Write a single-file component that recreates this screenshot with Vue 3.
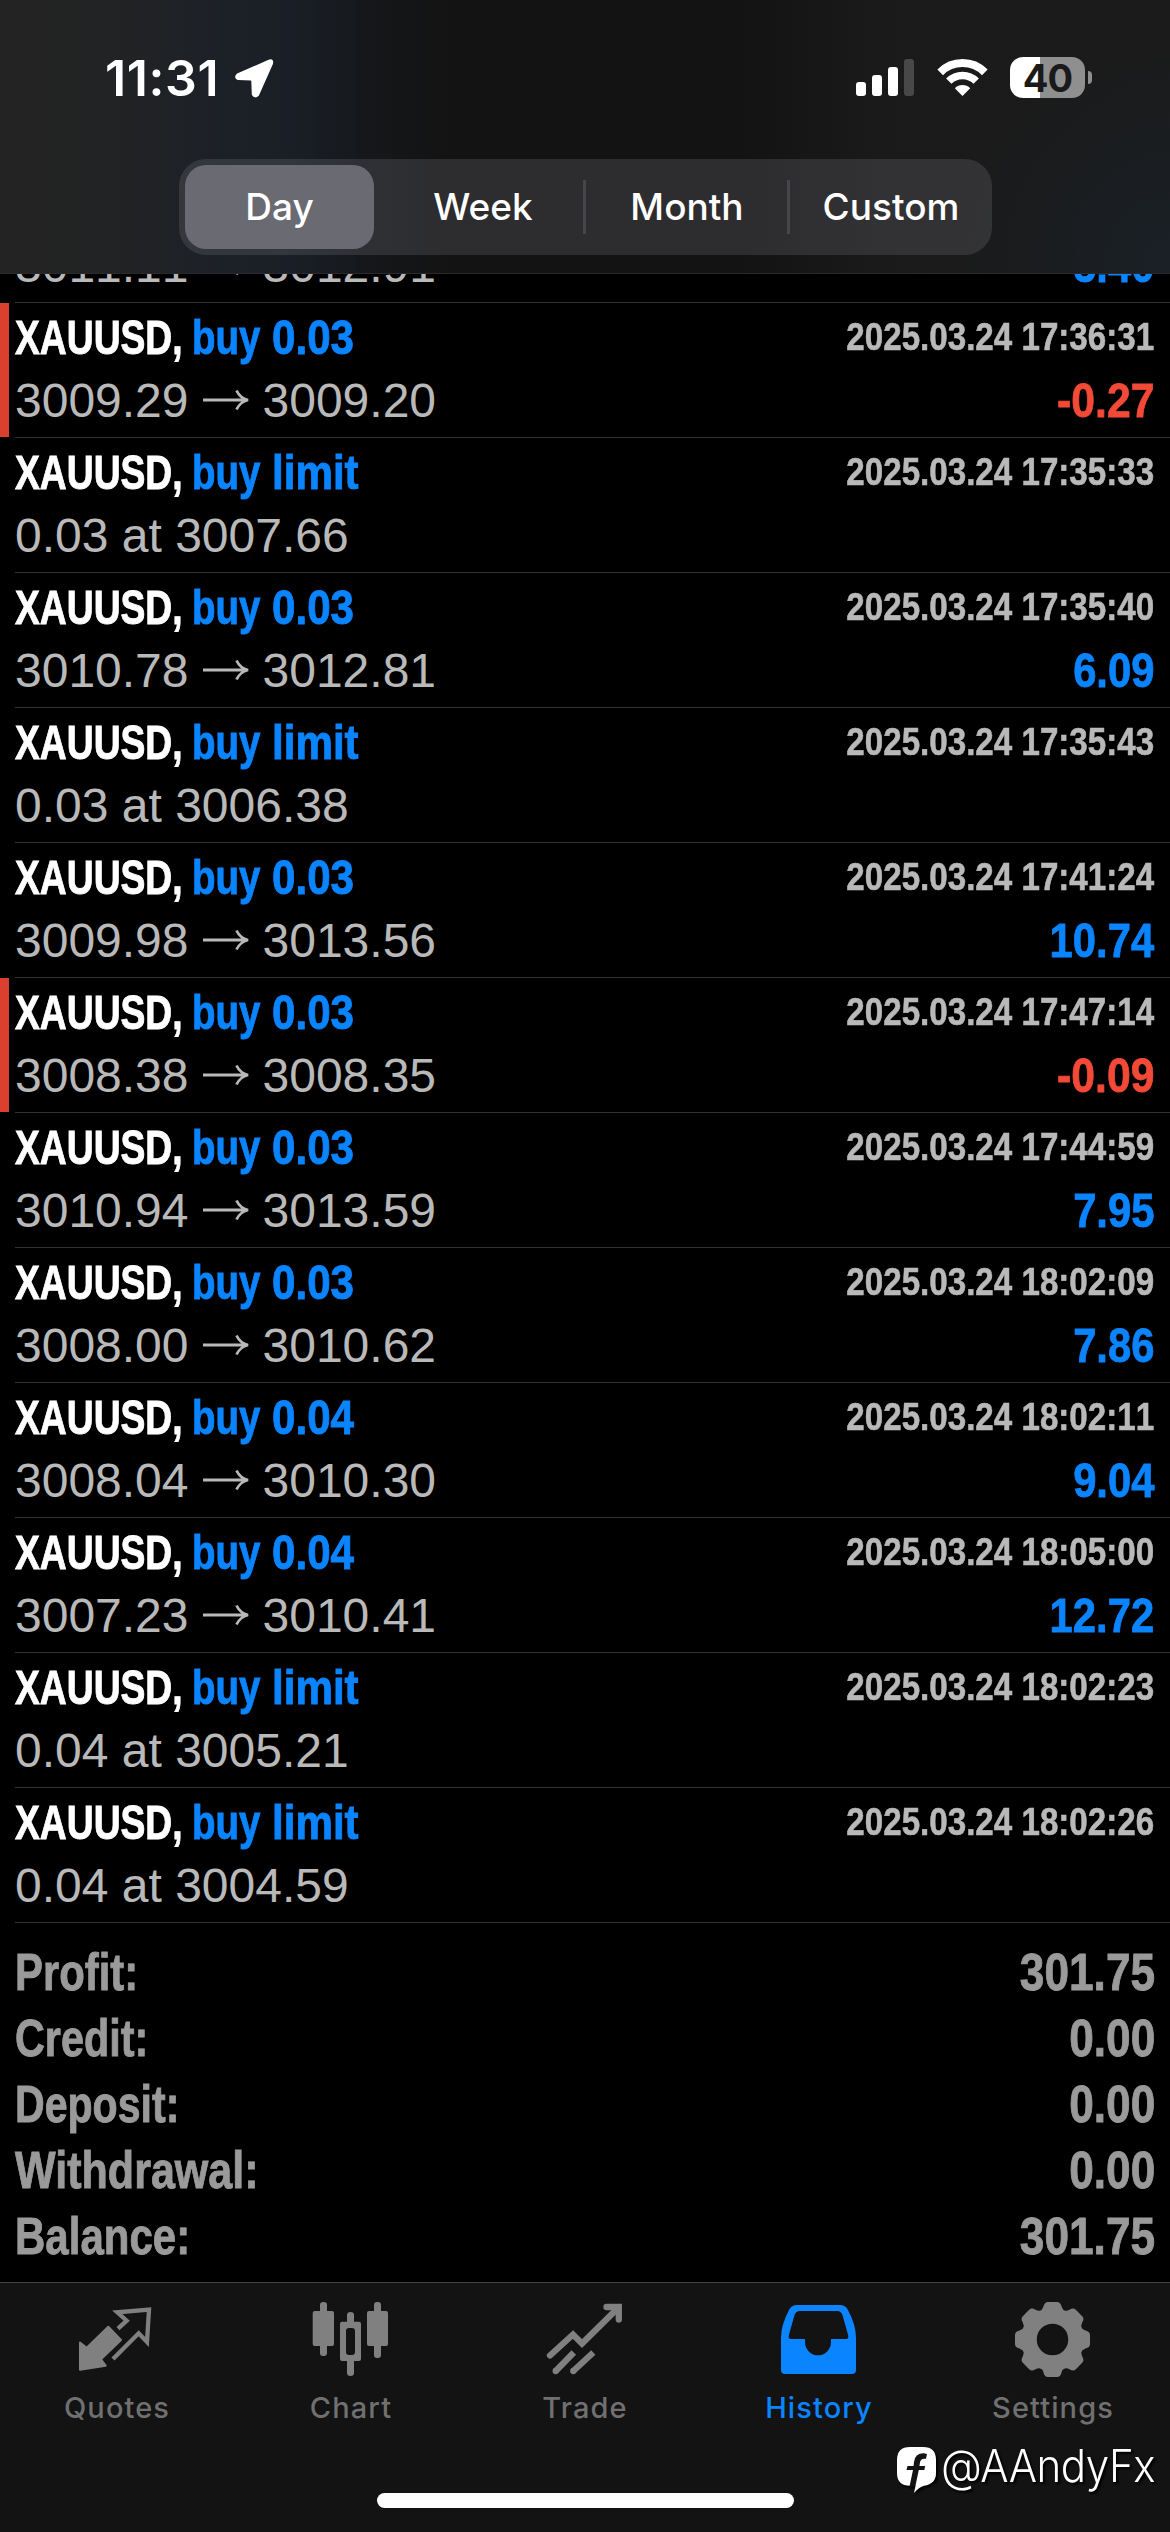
<script setup>
const periods = ['Day', 'Week', 'Month', 'Custom']

const deals = [
  { from: '3011.11', to: '3012.91', profit: '5.40' },
  { type: 'buy', amount: '0.03', from: '3009.29', to: '3009.20', time: '2025.03.24 17:36:31', profit: '-0.27', loss: true },
  { type: 'buy', amount: 'limit', order: '0.03 at 3007.66', time: '2025.03.24 17:35:33' },
  { type: 'buy', amount: '0.03', from: '3010.78', to: '3012.81', time: '2025.03.24 17:35:40', profit: '6.09' },
  { type: 'buy', amount: 'limit', order: '0.03 at 3006.38', time: '2025.03.24 17:35:43' },
  { type: 'buy', amount: '0.03', from: '3009.98', to: '3013.56', time: '2025.03.24 17:41:24', profit: '10.74' },
  { type: 'buy', amount: '0.03', from: '3008.38', to: '3008.35', time: '2025.03.24 17:47:14', profit: '-0.09', loss: true },
  { type: 'buy', amount: '0.03', from: '3010.94', to: '3013.59', time: '2025.03.24 17:44:59', profit: '7.95' },
  { type: 'buy', amount: '0.03', from: '3008.00', to: '3010.62', time: '2025.03.24 18:02:09', profit: '7.86' },
  { type: 'buy', amount: '0.04', from: '3008.04', to: '3010.30', time: '2025.03.24 18:02:11', profit: '9.04' },
  { type: 'buy', amount: '0.04', from: '3007.23', to: '3010.41', time: '2025.03.24 18:05:00', profit: '12.72' },
  { type: 'buy', amount: 'limit', order: '0.04 at 3005.21', time: '2025.03.24 18:02:23' },
  { type: 'buy', amount: 'limit', order: '0.04 at 3004.59', time: '2025.03.24 18:02:26' },
]

const totals = [
  { label: 'Profit:', value: '301.75', stretch: 0.805 },
  { label: 'Credit:', value: '0.00', stretch: 0.795 },
  { label: 'Deposit:', value: '0.00', stretch: 0.79 },
  { label: 'Withdrawal:', value: '0.00', stretch: 0.828 },
  { label: 'Balance:', value: '301.75', stretch: 0.808 },
]

const tabs = ['Quotes', 'Chart', 'Trade', 'History', 'Settings']

const teeth = [0, 45, 90, 135, 180, 225, 270, 315]
</script>

<template>
  <div class="screen">
    <header class="top">
      <div class="status">
        <span class="clock">11:31</span>
        <svg class="location" width="40" height="40" viewBox="0 0 40 40">
          <path d="M3.500 16.500 L35 2.600 Q39 1.500 38 5.500 L24 37 Q21 40 18.800 36.500 L18.300 22.800 Q18.200 21.600 17 21.600 L4 21 Q0.500 19.500 3.500 16.500Z" fill="#fff" stroke="#fff" stroke-width="2" stroke-linejoin="round" />
        </svg>
        <svg class="signal" width="58" height="38" viewBox="0 0 58 38" fill="#fff">
          <rect x="0" y="23" width="10" height="14" rx="3" />
          <rect x="16" y="16" width="10" height="21" rx="3" />
          <rect x="32" y="8" width="10" height="29" rx="3" />
          <rect x="48" y="0" width="10" height="37" rx="3" fill="#484848" />
        </svg>
        <svg class="wifi" width="51" height="38" viewBox="0 0 51 38" fill="none" stroke="#fff">
          <path d="M3.200 13.300 A31.500 31.500 0 0 1 47.800 13.300" stroke-width="8" />
          <path d="M11.800 22.200 A19.300 19.300 0 0 1 39.200 22.200" stroke-width="7.500" />
          <path d="M25.500 37 L17.800 29.300 A10.800 10.800 0 0 1 33.200 29.300 Z" fill="#fff" stroke="none" />
        </svg>
        <div class="battery"><span>40</span></div>
        <i class="nub"></i>
      </div>
      <nav class="segments">
        <button v-for="(p, i) in periods" :key="p" class="segment" :class="{ on: i === 0, split: i > 1 }"><span>{{ p }}</span></button>
      </nav>
    </header>

    <main class="deals">
      <article v-for="(d, i) in deals" :key="i" class="deal" :class="{ loss: d.loss }">
        <div class="line head">
          <template v-if="d.type">
            <span class="cell symbol"><b>XAUUSD,</b></span>
            <span class="cell type"><b>{{ d.type }}</b></span>
            <span class="cell amount"><b>{{ d.amount }}</b></span>
            <span class="time">{{ d.time }}</span>
          </template>
        </div>
        <div class="line detail">
          <template v-if="d.from">
            <span class="price">{{ d.from }}</span>
            <svg class="arrow" width="48" height="22" viewBox="0 0 48 22" fill="none" stroke="#b9b9b9" stroke-width="2.800">
              <path d="M1 11 H45 M34.500 1.500 Q38 9 46 11 Q38 13 34.500 20.500" />
            </svg>
            <span class="price">{{ d.to }}</span>
          </template>
          <span v-else class="price">{{ d.order }}</span>
          <span v-if="d.profit" class="profit">{{ d.profit }}</span>
        </div>
      </article>
    </main>

    <section class="totals">
      <div v-for="t in totals" :key="t.label" class="total">
        <span class="label" :style="{ transform: `scaleX(${t.stretch})` }">{{ t.label }}</span>
        <span class="value">{{ t.value }}</span>
      </div>
    </section>

    <footer class="tabs">
      <a v-for="t in tabs" :key="t" class="tab" :class="{ current: t === 'History' }">
        <svg width="80" height="80" viewBox="0 0 80 80" fill="currentColor">
          <g v-if="t === 'Quotes'">
            <path d="M3 42.500 L9.700 47.800 L31.300 26.700 L44 40 L24 59.300 L28.700 65.700 L3 69.700Z" stroke="currentColor" stroke-width="2" stroke-linejoin="round" />
            <path d="M41 28.700 L49.700 20.700 L40.300 12.300 L72 9.700 L70 42 L61.700 33.300 L36 59" fill="none" stroke="currentColor" stroke-width="4.300" />
          </g>
          <g v-else-if="t === 'Chart'">
            <rect x="1.700" y="11" width="21.300" height="35" rx="2" />
            <rect x="9" y="2" width="7" height="54" rx="3" />
            <path fill-rule="evenodd" d="M31 21.700 H36 V15 Q36 12 39.500 12 Q43 12 43 15 V21.700 H48 Q50 21.700 50 23.700 V59 Q50 61 48 61 H43 V73 Q43 76 39.500 76 Q36 76 36 73 V61 H31 Q29 61 29 59 V23.700 Q29 21.700 31 21.700Z M38 28 Q35 28 35 31 V52 Q35 55 38 55 H41 Q44 55 44 52 V31 Q44 28 41 28Z" />
            <rect x="56" y="11" width="21" height="35" rx="2" />
            <rect x="63" y="2" width="7" height="56" rx="3" />
          </g>
          <g v-else-if="t === 'Trade'" fill="none" stroke="currentColor" stroke-width="6.300">
            <path d="M5 55.500 L28 34.500 L37 43.500 L73 8" stroke-linecap="round" />
            <path d="M61.500 7 H73.800 V19.500" stroke-linecap="round" />
            <path d="M28.800 52.500 L10.700 71 M48.300 52.500 L28.300 71" />
            <path d="M10.700 71 h.01 M28.300 71 h.01" stroke-linecap="round" />
          </g>
          <path v-else-if="t === 'History'" fill-rule="evenodd" d="M18 5 H61 Q66.500 5 69 10 Q77 25 77 38 V70 Q77 74 73 74 H6 Q2 74 2 70 V38 Q2 25 10 10 Q12.500 5 18 5Z M21 11 Q17 11 15.500 15 L10.200 34 Q8.500 39 12 39 H26 V42 A13 13.300 0 0 0 52 42 V39 H67 Q70.500 39 68.800 34 L63.500 15 Q62 11 58 11Z" />
          <g v-else>
            <circle cx="39.500" cy="39.500" r="23" fill="none" stroke="currentColor" stroke-width="14.500" />
            <path v-for="a in teeth" :key="a" :transform="`rotate(${a} 39.500 39.500)`" d="M26 11.500 Q29.500 10 30.500 6.500 Q31.500 2 35 2 H44 Q47.500 2 48.500 6.500 Q49.500 10 53 11.500 L48 20 H31Z" />
          </g>
        </svg>
        <span>{{ t }}</span>
      </a>
    </footer>

    <div class="handle">
      <svg width="42" height="50" viewBox="0 0 42 50">
        <path d="M14 1 H27 Q40 1 40 14 V27 Q40 38 28 39.700 Q23 41 18 47 L19.500 39.700 H14 Q1 39.700 1 27 V14 Q1 1 14 1Z" fill="#fff" />
        <path d="M28 7.300 Q19 7 18 16 L17.600 20 H11.500 L10.500 24 H17 L13.500 40.500 H19.300 L22.800 24 H28.300 L29.200 20 H23.400 L24 16.500 Q24.500 12 30 12.800 L31 8Z" fill="#131313" />
      </svg>
      <span>@AAndyFx</span>
    </div>
    <div class="home"></div>
  </div>
</template>

<style>
body {
  background: #000;
}
</style>

<style scoped>
.screen {
  position: relative;
  display: flex;
  flex-direction: column;
  width: 1170px;
  height: 2532px;
  overflow: hidden;
  background: #000;
  color: #fff;
  font-family: "Liberation Sans", Arial, sans-serif;
}

.top {
  box-sizing: border-box;
  height: 274px;
  flex: none;
  border-bottom: 1px solid #2a2a2b;
  background:
    radial-gradient(circle at 1170px 260px, #1a2026 0, #1a202600 220px),
    linear-gradient(90deg, #232323 0, #222324 110px, #1c2027 230px, #1a1f27 290px, #15171a 370px, #131313 450px, #131313 740px, #1a1a1a 880px, #1b1b1b 100%);
}

.status {
  display: flex;
  align-items: flex-start;
  height: 159px;
}

.status > * { flex: none; }

.clock {
  width: 129px;
  padding-left: 105px;
  font: 600 50px/60px Inter, sans-serif;
  letter-spacing: 0.6px;
  margin-top: 48px;
}

.location { margin-top: 58px; }
.signal { margin: 59px 0 0 582px; }
.wifi { margin: 59px 0 0 23px; }

.battery {
  width: 75px;
  height: 41px;
  margin: 57px 0 0 22px;
  border-radius: 13px;
  background: linear-gradient(90deg, #fff 30px, #8f8f8f 30px);
  color: #1a1a1a;
  font: 650 38px/42px Inter, sans-serif;
  letter-spacing: -1px;
  text-align: center;
}

.nub {
  width: 4px;
  height: 13px;
  margin: 71px 0 0 3px;
  border-radius: 0 5px 5px 0;
  background: #8f8f8f;
}

.segments {
  display: flex;
  width: 813px;
  height: 96px;
  margin-left: 179px;
  border-radius: 27px;
  background: rgba(118, 118, 128, 0.26);
}

.segment {
  position: relative;
  flex: 1;
  padding: 0;
  border: 0;
  background: none;
  color: #fff;
  font: 500 37px/96px Inter, sans-serif;
}

.segment.split { padding-left: 2px; }

.segment.on {
  flex: none;
  width: 189px;
  margin: 6px 8px 6px 6px;
  border-radius: 21px;
  background: #6a6a73;
  line-height: 84px;
}

.segment.split::before {
  content: "";
  position: absolute;
  left: -1px;
  top: 21px;
  width: 3px;
  height: 54px;
  background: #45454b;
}

.deals {
  display: flex;
  flex: none;
  flex-direction: column;
  justify-content: flex-end;
  height: 1649px;
  overflow: hidden;
}

.deal {
  position: relative;
  flex: none;
  height: 135px;
}

.deal::after {
  content: "";
  position: absolute;
  left: 15px;
  right: 0;
  bottom: 0;
  height: 1px;
  background: #323232;
}

.deal.loss::before {
  content: "";
  position: absolute;
  left: 0;
  top: 0;
  width: 9px;
  height: 134px;
  background: #db402f;
}

.line {
  display: flex;
  padding: 0 16px 0 15px;
  white-space: nowrap;
}

.head {
  height: 68px;
  font-size: 49px;
  line-height: 68px;
  -webkit-text-stroke: 0.9px currentColor;
}

.cell b {
  display: inline-block;
  transform-origin: 0 50%;
  -webkit-text-stroke: 0.9px currentColor;
}

.symbol { width: 177px; }
.symbol b { transform: scaleX(0.76); }
.type { width: 80px; color: #0a84ff; }
.type b { transform: scaleX(0.785); }
.amount { width: 100px; color: #0a84ff; }
.amount b { transform: scaleX(0.86); }

.time {
  margin-left: auto;
  color: #b9b9b9;
  font-size: 39px;
  font-weight: 700;
  font-kerning: none;
  line-height: 67px;
  -webkit-text-stroke: 0.6px currentColor;
  transform: scaleX(0.85);
  transform-origin: 100% 50%;
}

.detail {
  height: 60px;
  color: #b9b9b9;
  font-size: 48px;
  font-kerning: none;
  line-height: 59px;
}

.arrow { margin: 18px 13px 0 13px; }

.profit {
  margin-left: auto;
  color: #0a84ff;
  font-weight: 700;
  -webkit-text-stroke: 0.8px currentColor;
  transform: scaleX(0.87);
  transform-origin: 100% 50%;
}

.loss .profit {
  color: #f24a37;
  transform: scaleX(0.89);
}

.totals {
  flex: none;
  height: 343px;
  padding-top: 16px;
  color: #9a9a9a;
  font-size: 52px;
  font-weight: 700;
  line-height: 66px;
  -webkit-text-stroke: 0.9px currentColor;
}

.total {
  display: flex;
  justify-content: space-between;
  padding: 0 15px;
}

.label { transform-origin: 0 50%; }
.value { transform: scaleX(0.85); transform-origin: 100% 50%; }

.tabs {
  display: flex;
  flex: none;
  height: 249px;
  border-top: 1px solid #444;
  background: #131313;
}

.tab {
  display: flex;
  flex: 1;
  flex-direction: column;
  align-items: center;
  padding-top: 17px;
  color: #808080;
}

.tab span {
  margin-top: 8px;
  color: #707070;
  font: 500 29px/40px Inter, sans-serif;
  letter-spacing: 1.1px;
}

.tab.current,
.tab.current span { color: #0a84ff; }

.handle {
  position: absolute;
  left: 896px;
  top: 2446px;
  display: flex;
  align-items: flex-start;
  width: 262px;
  filter: drop-shadow(2px 2px 1px #000);
}

.handle svg { flex: none; }

.handle span {
  margin: -5px 0 0 3px;
  font: 300 45px/50px Inter, sans-serif;
  letter-spacing: -0.5px;
  transform: scaleX(0.935);
  transform-origin: 0 50%;
}

.home {
  position: absolute;
  left: 377px;
  top: 2493px;
  width: 417px;
  height: 15px;
  border-radius: 8px;
  background: #fff;
}
</style>
